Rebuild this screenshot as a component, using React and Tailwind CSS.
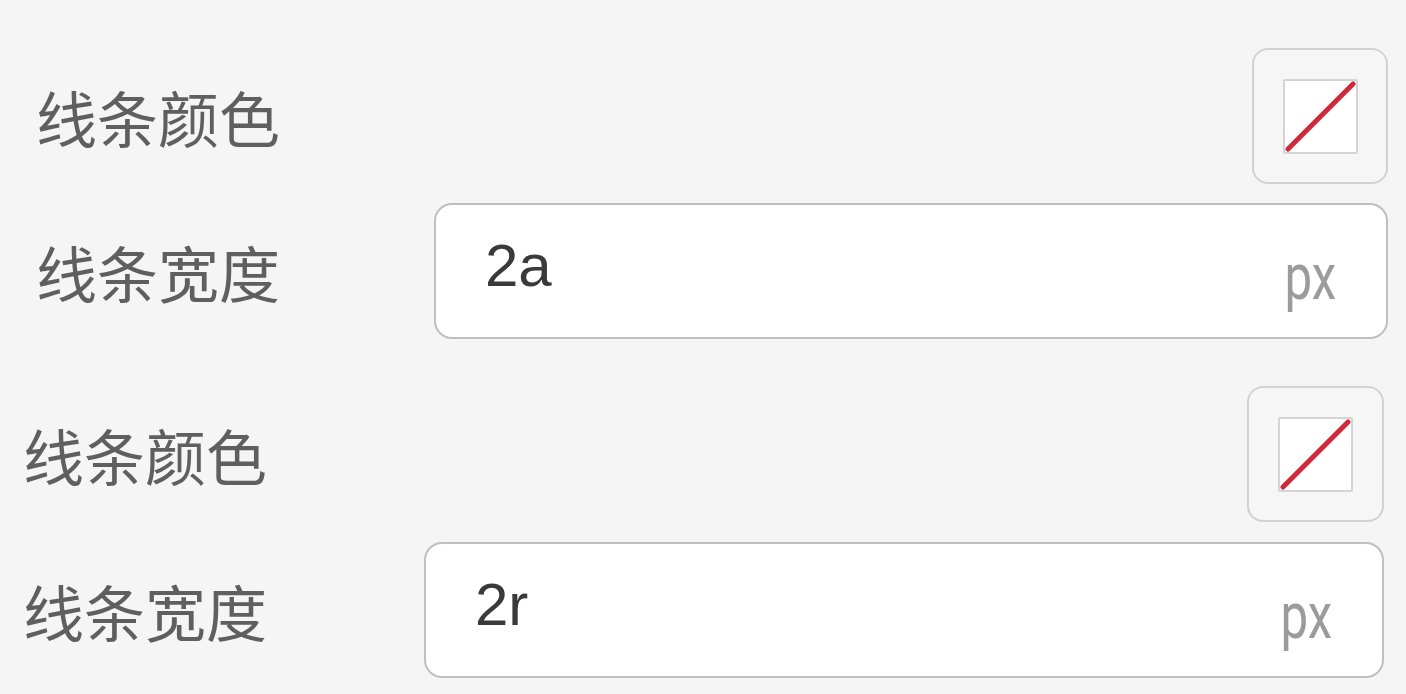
import React from "react";

const cjk = { fontFamily: '"Noto Sans CJK SC", "Noto Sans", sans-serif' };

function ColorBox({ size }) {
  return (
    <div className={`${size} shrink-0 rounded-[16px] border-2 border-[#d2d2d2] bg-[#f6f6f6] flex items-center justify-center`}>
      <div className="w-[75px] h-[75px] border-2 border-[#d4d4d4] bg-white rounded-[2px] relative">
        <svg className="absolute inset-0" width="71" height="71" viewBox="0 0 71 71">
          <line x1="3" y1="68" x2="68" y2="3" stroke="#cf2a3b" strokeWidth="5" strokeLinecap="round" />
        </svg>
      </div>
    </div>
  );
}

function WidthInput({ value, width }) {
  return (
    <div className={`${width} h-[136px] shrink-0 rounded-[18px] border-2 border-[#bfbfbf] bg-white flex items-center pl-[49px] pr-[50px]`}>
      <span
        className="text-[60px] leading-none text-[#3a3a3a] -mt-[10px]"
        style={{ fontFamily: '"Liberation Sans", Arial, sans-serif' }}
      >
        {value}
      </span>
      <span
        className="ml-auto text-[64px] leading-none text-[#9b9b9b] mt-[14px] scale-x-[0.77] origin-right inline-block"
        style={{ fontFamily: '"Roboto", "Liberation Sans", sans-serif' }}
      >
        px
      </span>
    </div>
  );
}

function Label({ children }) {
  return (
    <span className="text-[61px] leading-none text-[#5f5f5f]" style={cjk}>
      {children}
    </span>
  );
}

export default function App() {
  return (
    <div className="w-[1406px] h-[694px] bg-[#f5f5f5] overflow-hidden">
      <div className="pt-[48px] pl-[36px] pr-[18px] flex flex-col gap-[19px]">
        <div className="flex items-center justify-between h-[136px]">
          <Label>线条颜色</Label>
          <ColorBox size="w-[136px] h-[136px]" />
        </div>
        <div className="flex items-center justify-between h-[136px]">
          <Label>线条宽度</Label>
          <WidthInput value="2a" width="w-[954px]" />
        </div>
      </div>
      <div className="mt-[47px] pl-[23px] pr-[22px] flex flex-col gap-[20px]">
        <div className="flex items-center justify-between h-[136px]">
          <Label>线条颜色</Label>
          <ColorBox size="w-[137px] h-[136px]" />
        </div>
        <div className="flex items-center justify-between h-[136px]">
          <Label>线条宽度</Label>
          <WidthInput value="2r" width="w-[960px]" />
        </div>
      </div>
    </div>
  );
}
